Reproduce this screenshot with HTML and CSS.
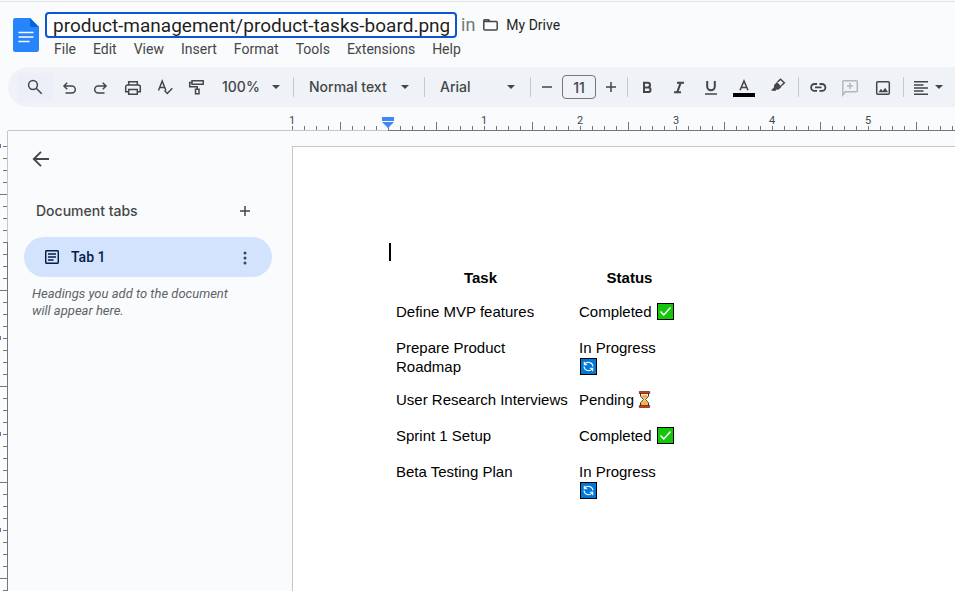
FILE: index.html
```html
<!DOCTYPE html>
<html lang="en">
<head>
<meta charset="utf-8">
<title>product-tasks-board - Docs</title>
<link rel="stylesheet" href="styles.css">
</head>
<body>
<header class="header">
  <svg class="logo" viewBox="0 0 26 34" aria-hidden="true">
    <path fill="#2684fc" d="M2.500 0H17l9 9v22.500a2.500 2.500 0 0 1-2.500 2.500h-21A2.500 2.500 0 0 1 0 31.500V2.500A2.500 2.500 0 0 1 2.500 0z"/>
    <path fill="#0066da" d="M17 0l9 9h-7.500a1.500 1.500 0 0 1-1.500-1.500z"/>
    <path stroke="#fff" stroke-width="1.700" d="M5.500 14.500h15M5.500 19h15M5.500 23.500h11"/>
  </svg>
  <div class="heading">
    <div class="title-row">
      <input class="title" type="text" aria-label="Document title" value="product-management/product-tasks-board.png">
      <span class="in">in</span>
      <a class="drive" href="#">
        <svg width="15" height="12" viewBox="0 0 15 12" fill="none" stroke="#444746" stroke-width="1.500" aria-hidden="true"><path d="M1 2.500h12.500a.7.7 0 0 1 .7.7V10a1 1 0 0 1-1 1H1.800a1 1 0 0 1-1-1V1.800a1 1 0 0 1 1-1h3.700l1.700 1.700"/></svg>
        My Drive</a>
    </div>
    <nav class="menus">
      <button>File</button><button>Edit</button><button>View</button><button>Insert</button><button>Format</button><button>Tools</button><button>Extensions</button><button>Help</button>
    </nav>
  </div>
</header>

<div class="toolbar" role="toolbar">
  <button class="tool search" aria-label="Search the menus"><svg class="icon" viewBox="0 0 20 20"><circle cx="8" cy="8" r="4.400"/><path d="M11.200 11.200l5.500 5.500"/></svg></button>
  <button class="tool" aria-label="Undo"><svg class="icon" viewBox="0 0 20 20"><path d="M8.200 5.800L5 9l3.200 3.200M5 9h7.800a3.500 3.500 0 0 1 0 7H6.500"/></svg></button>
  <button class="tool" aria-label="Redo"><svg class="icon" viewBox="0 0 20 20"><path d="M11.800 5.800L15 9l-3.200 3.200M15 9H7.200a3.500 3.500 0 0 0 0 7h6.300"/></svg></button>
  <button class="tool" aria-label="Print"><svg class="icon" viewBox="0 0 20 20"><path d="M5.700 8V4.700h8.600V8M5.700 14.700h-3V10a2 2 0 0 1 2-2h10.600a2 2 0 0 1 2 2v4.700h-3M5.700 12.500h8.600v4.800H5.700z"/></svg></button>
  <button class="tool" aria-label="Spelling and grammar check"><svg class="icon" viewBox="0 0 20 20"><path d="M3.500 13.500L7.200 4l3.700 9.500M4.800 10.500h4.800M9.500 13.500l2.800 3 5-5.200"/></svg></button>
  <button class="tool" aria-label="Paint format"><svg class="icon" viewBox="0 0 20 20"><path d="M5 3.700h11.200v3.500H5zM5 5.500H2.700v4.200h7.500v2.600M8.500 12.300h3.500v4.500H8.500z"/></svg></button>
  <label class="pick zoom"><select aria-label="Zoom"><option>100%</option></select><svg class="caret" viewBox="0 0 8 4"><path d="M0 0h8L4 4z"/></svg></label>
  <span class="sep"></span>
  <label class="pick style"><select aria-label="Styles"><option>Normal text</option></select><svg class="caret" viewBox="0 0 8 4"><path d="M0 0h8L4 4z"/></svg></label>
  <span class="sep"></span>
  <label class="pick font"><select aria-label="Font"><option>Arial</option></select><svg class="caret" viewBox="0 0 8 4"><path d="M0 0h8L4 4z"/></svg></label>
  <span class="sep"></span>
  <button class="step" aria-label="Decrease font size"><svg class="icon" viewBox="0 0 20 20"><path d="M5 10h10"/></svg></button>
  <input class="size" type="text" aria-label="Font size" value="11">
  <button class="step" aria-label="Increase font size"><svg class="icon" viewBox="0 0 20 20"><path d="M5 10h10M10 5v10"/></svg></button>
  <span class="sep"></span>
  <button class="tool" aria-label="Bold"><svg class="icon heavy" viewBox="0 0 20 20"><path d="M6 5.800h3.700a2.300 2.300 0 0 1 0 4.600H6zM6 10.400h4.200a2.300 2.300 0 0 1 0 4.700H6z"/></svg></button>
  <button class="tool" aria-label="Italic"><svg class="icon heavy" viewBox="0 0 20 20"><path d="M7 5.700h7M4 15.200h7M10.700 5.700L7.300 15.200"/></svg></button>
  <button class="tool" aria-label="Underline"><svg class="icon" viewBox="0 0 20 20"><path stroke-width="2" d="M5.200 4v5.500a3.800 3.800 0 0 0 7.600 0V4"/><path d="M3 17h12"/></svg></button>
  <button class="tool" aria-label="Text color"><svg class="wide" viewBox="0 0 22 20"><path fill="none" stroke="#444746" stroke-width="1.600" d="M7 13.200L11 4l4 9.200M8.400 10.500h5.200"/><path d="M0 16h22v4H0z"/></svg></button>
  <button class="tool marker" aria-label="Highlight color"><svg class="icon" viewBox="0 0 20 20"><path fill="#444746" stroke="none" d="M4 13.500l3.200-3.500-.3-1.700 3-3.300 4.800 4.700-3.300 3.100-1.900-.2-1.300 1.300z"/><path d="M10.500 5l3-2.800 3.800 3.600-3 3"/></svg></button>
  <span class="sep"></span>
  <button class="tool" aria-label="Insert link"><svg class="icon" viewBox="0 0 20 20"><path stroke-width="1.800" d="M8 7H5.500a3.400 3.400 0 0 0 0 6.800H8M10.500 7H13a3.400 3.400 0 0 1 0 6.800h-2.500M6 10.400h6.500"/></svg></button>
  <button class="tool" aria-label="Add comment" disabled><svg class="icon pale" viewBox="0 0 20 20"><path d="M1.800 18V4.700a1 1 0 0 1 1-1h12.500a1 1 0 0 1 1 1v9a1 1 0 0 1-1 1H4.500zM9 6v6M6 9h6"/></svg></button>
  <button class="tool" aria-label="Insert image"><svg class="icon" viewBox="0 0 20 20"><rect x="3.700" y="4.700" width="12.600" height="12.600" rx="1"/><path fill="#444746" stroke="none" d="M5.500 15.200l2.500-3.400 1.700 2.100 2.500-3.200 2.800 4.500z"/></svg></button>
  <span class="sep"></span>
  <button class="tool align" aria-label="Align"><svg class="icon" viewBox="0 0 20 20"><path d="M3 4.800h14M3 7.900h9.500M3 11h14M3 14.100h9.500M3 17.200h14"/></svg><svg class="caret" viewBox="0 0 8 4"><path d="M0 0h8L4 4z"/></svg></button>
</div>

<main class="workspace">
  <svg class="ruler" aria-hidden="true">
    <defs>
      <pattern id="ticks" x="0" y="0" width="96" height="24" patternUnits="userSpaceOnUse">
        <path d="M0 19h1v4H0zM12 19h1v4h-1zM24 19h1v4h-1zM36 19h1v4h-1zM48 15h1v8h-1zM60 19h1v4h-1zM72 19h1v4h-1zM84 19h1v4h-1z" fill="#747775"/>
      </pattern>
    </defs>
    <g transform="translate(292 0)">
      <rect width="100%" height="23" fill="url(#ticks)"/>
      <text x="0" y="17">1</text><text x="192" y="17">1</text><text x="288" y="17">2</text><text x="384" y="17">3</text><text x="480" y="17">4</text><text x="576" y="17">5</text>
    </g>
    <rect x="8" y="23" width="380" height="1" fill="#c4c7c5"/>
    <rect x="388" y="23" width="100%" height="1" fill="#747775"/>
    <path fill="#4285f4" d="M382 10h12v4h-12zM382 15h12l-6 6z"/>
  </svg>

  <svg class="vruler" aria-hidden="true">
    <defs>
      <pattern id="vticks" x="0" y="15" width="8" height="96" patternUnits="userSpaceOnUse">
        <path d="M3 0h4v1H3zM3 12h4v1H3zM3 24h4v1H3zM3 36h4v1H3zM0 48h7v1H0zM3 60h4v1H3zM3 72h4v1H3zM3 84h4v1H3z" fill="#747775"/>
      </pattern>
    </defs>
    <rect y="15" width="7" height="100%" fill="url(#vticks)"/>
    <rect x="7" width="1" height="111" fill="#c4c7c5"/>
    <rect x="7" y="111" width="1" height="100%" fill="#747775"/>
    <path fill="#8065b0" d="M0 13h1v4H0zM0 205h1v4H0zM0 301h1v4H0zM0 397h1v4H0z"/>
  </svg>

  <aside class="sidebar">
    <button class="back" aria-label="Close tabs panel"><svg class="icon" viewBox="0 0 20 20"><path stroke-width="1.900" d="M18 10H3M10 2.800L2.800 10l7.200 7.200"/></svg></button>
    <div class="tabs-head">
      <h2>Document tabs</h2>
      <button class="round" aria-label="Add tab"><svg class="icon" viewBox="0 0 20 20"><path d="M5 10h10M10 5v10"/></svg></button>
    </div>
    <div class="tab">
      <svg class="tab-icon" viewBox="0 0 14 14" fill="none" stroke="#041e49" stroke-width="1.500" aria-hidden="true"><rect x=".7" y=".7" width="12.600" height="12.600" rx="1"/><path stroke-width="1.300" d="M3 4h8M3 7h8M3 10h5.500"/></svg>
      <a href="#">Tab 1</a>
      <button class="round" aria-label="Tab options"><svg class="icon" viewBox="0 0 20 20"><g fill="#444746" stroke="none"><circle cx="10" cy="6" r="1.500"/><circle cx="10" cy="11" r="1.500"/><circle cx="10" cy="16" r="1.500"/></g></svg></button>
    </div>
    <p class="hint">Headings you add to the document will appear here.</p>
  </aside>

  <svg class="defs" aria-hidden="true">
    <symbol id="done" viewBox="0 0 17 17"><path d="M0 0h17v17H0z"/><path fill="#16c60c" d="M1 1h15v15H1z"/><path fill="none" stroke="#fff" stroke-width="1.500" d="M3.500 8.500L6.800 12l6.700-7.500"/></symbol>
    <symbol id="cycle" viewBox="0 0 17 17"><path d="M0 0h17v17H0z"/><path fill="#0078d7" d="M1 1h15v15H1z"/><path fill="none" stroke="#fff" stroke-width="1.100" d="M4.500 6.500a4.600 4.600 0 0 1 8.500 2M12.500 10.500a4.600 4.600 0 0 1-8.500-2M4.300 3.700v3h3M12.700 13.300v-3h-3"/></symbol>
    <symbol id="glass" viewBox="0 0 13 17"><path fill="#fff3d0" stroke="#333" d="M2.500 2v3l3 3.500-3 3.500v3h8v-3l-3-3.500 3-3.500V2z"/><path fill="#fcb034" d="M4 4h5v1.500L6.500 8.200 4 5.500zM6.500 9L10 12.500V15H3v-2.500z"/><path fill="#d13a1f" stroke="#4a1008" stroke-width=".6" d="M1.300.5h10.400v2H1.300zM1.300 14.500h10.400v2H1.300z"/></symbol>
  </svg>

  <article class="page">
    <div class="cursor"></div>
    <table>
      <thead><tr><th>Task</th><th>Status</th></tr></thead>
      <tbody>
        <tr><td>Define MVP features</td><td>Completed <svg class="emoji" role="img" aria-label="done"><use href="#done"/></svg></td></tr>
        <tr><td>Prepare Product Roadmap</td><td>In Progress <svg class="emoji" role="img" aria-label="in progress"><use href="#cycle"/></svg></td></tr>
        <tr><td>User Research Interviews</td><td>Pending <svg class="emoji narrow" role="img" aria-label="pending"><use href="#glass"/></svg></td></tr>
        <tr><td>Sprint 1 Setup</td><td>Completed <svg class="emoji" role="img" aria-label="done"><use href="#done"/></svg></td></tr>
        <tr><td>Beta Testing Plan</td><td>In Progress <svg class="emoji" role="img" aria-label="in progress"><use href="#cycle"/></svg></td></tr>
      </tbody>
    </table>
  </article>
</main>
</body>
</html>
```
FILE: styles.css
```css
* { box-sizing: border-box; }

body {
  margin: 0;
  min-height: 100vh;
  display: flex;
  flex-direction: column;
  overflow: hidden;
  background: #f9fbfd;
  color: #444746;
  font: 14px/20px Roboto, "Liberation Sans", sans-serif;
}

button, input, select { font: inherit; color: inherit; }

button {
  padding: 0;
  border: 0;
  background: none;
}

a { color: inherit; text-decoration: none; }

/* Header */
.header {
  display: flex;
  height: 66px;
  margin-top: 1px;
  padding: 10px 13px 0;
  border-top: 1px solid #e0e2e6;
}

.logo { width: 26px; height: 34px; margin: 6px 6px 0 0; }

.title-row { display: flex; align-items: center; }

.title {
  width: 412px;
  height: 26px;
  padding: 0 6px;
  border: 2px solid #0b57d0;
  border-radius: 4px;
  outline: 0;
  background: #fff;
  color: #1f1f1f;
  font: 19px/22px Roboto, sans-serif;
}

.in { margin: 0 8px 0 4px; color: #747775; font-size: 18px; }

.drive { display: flex; align-items: center; gap: 8px; color: #1f1f1f; }

.menus { display: flex; gap: 1px; padding: 1px 0 0 1px; }
.menus button { padding: 0 8px; }

/* Toolbar */
.toolbar {
  display: flex;
  align-items: center;
  height: 40px;
  margin-left: 8px;
  padding-left: 9px;
  border-radius: 20px 0 0 20px;
  background: #eff2f7;
  font-family: Inter, Roboto, sans-serif;
  font-weight: 500;
}

.tool {
  display: flex;
  flex: none;
  align-items: center;
  justify-content: center;
  width: 32px;
  height: 28px;
}

.search { width: 36px; background: #eceffa; }
.marker { width: 34px; }
.align { gap: 4px; width: 38px; }

.icon {
  flex: none;
  width: 20px;
  height: 20px;
  fill: none;
  stroke: #444746;
  stroke-width: 1.5;
}

.heavy { stroke-width: 2; }
.pale { stroke: #b5b8bb; }
.wide { width: 22px; height: 20px; }

.caret { flex: none; width: 8px; height: 4px; fill: #444746; }

.pick { display: grid; flex: none; align-items: center; }
.pick > * { grid-area: 1 / 1; }
.pick .caret { justify-self: end; margin-right: 11px; pointer-events: none; }

.pick select {
  width: 100%;
  padding: 0 11px;
  border: 0;
  appearance: none;
  background: none;
}

.zoom { width: 76px; }
.zoom select { padding: 0 9px; }
.zoom .caret { margin-right: 9px; }
.style { width: 122px; }
.font { width: 97px; }

.sep { flex: none; width: 1px; height: 20px; margin: 0 4px; background: #c7c9cc; }

.step { display: flex; flex: none; justify-content: center; width: 24px; }

.size {
  flex: none;
  width: 34px;
  height: 24px;
  margin: 0 3px;
  padding: 0;
  border: 1px solid #747775;
  border-radius: 4px;
  background: none;
  text-align: center;
}

/* Workspace */
.workspace {
  display: grid;
  flex: 1;
  grid-template: 24px 1fr / 8px 284px 1fr;
}

.ruler { grid-column: 1 / -1; width: 100%; height: 24px; }
.ruler text { fill: #444746; font-size: 11px; text-anchor: middle; }
.vruler { width: 8px; height: 100%; }
.defs { position: absolute; width: 0; height: 0; }

.sidebar { padding: 18px 20px 0 16px; }

.back { display: block; margin-left: 7px; height: 20px; }

.tabs-head {
  display: flex;
  align-items: center;
  justify-content: space-between;
  height: 36px;
  margin-top: 24px;
  padding: 0 15px 0 12px;
}

.tabs-head h2 { margin: 0; font: 500 14px/20px Inter, Roboto, sans-serif; }

.round { display: flex; justify-content: center; width: 24px; }

.tab {
  display: flex;
  align-items: center;
  height: 40px;
  margin-top: 8px;
  padding: 0 15px 0 21px;
  border-radius: 20px;
  background: #d3e3fd;
  color: #041e49;
  font-weight: 500;
}

.tab-icon { width: 14px; height: 14px; margin-right: 12px; }
.tab a { flex: 1; }

.hint {
  margin: 8px 32px 0 8px;
  color: #5f6368;
  font-size: 13px;
  font-style: italic;
  line-height: 17px;
}

/* Document */
.page {
  margin-top: 15px;
  padding: 96px 96px 0;
  border: solid #c4c7c5;
  border-width: 1px 0 0 1px;
  background: #fff;
  color: #000;
  font: 15px/19px "Liberation Sans", Arial, sans-serif;
}

.cursor { width: 2px; height: 18px; background: #000; }

table { width: 298px; border-collapse: collapse; table-layout: fixed; }
th, td { padding: 7px; text-align: left; vertical-align: top; }
th { height: 34px; text-align: center; }
th:first-child { width: 183px; }
th + th { width: 115px; }
td { height: 36px; padding-right: 4px; }
td + td { padding-right: 11px; }

.emoji { width: 17px; height: 17px; margin: 0 1px; vertical-align: -3px; }
.narrow { width: 13px; margin: 0; }
```
